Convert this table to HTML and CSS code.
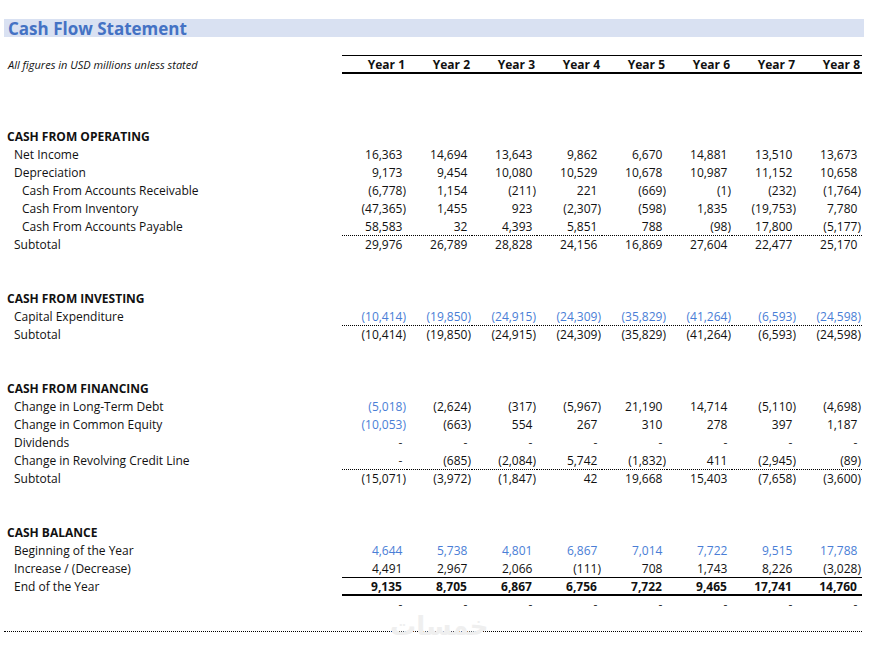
FILE: index.html
```html
<!DOCTYPE html>
<html>
<head>
<meta charset="utf-8">
<link rel="stylesheet" href="styles.css">
</head>
<body>
<div class="sheet">
  <div class="row"></div>
  <div class="row title-row"><div class="title">Cash Flow Statement</div></div>
  <div class="row"></div>
  <div class="row head">
    <div class="lbl sub">All figures in USD millions unless stated</div>
    <div class="c yh">Year 1</div><div class="c yh">Year 2</div><div class="c yh">Year 3</div><div class="c yh">Year 4</div><div class="c yh">Year 5</div><div class="c yh">Year 6</div><div class="c yh">Year 7</div><div class="c yh">Year 8</div>
  </div>
  <div class="row"></div>
  <div class="row"></div>
  <div class="row"></div>

  <div class="row"><div class="lbl sec">CASH FROM OPERATING</div></div>
  <div class="row"><div class="lbl l1">Net Income</div>
    <div class="c p">16,363</div><div class="c p">14,694</div><div class="c p">13,643</div><div class="c p">9,862</div><div class="c p">6,670</div><div class="c p">14,881</div><div class="c p">13,510</div><div class="c p">13,673</div></div>
  <div class="row"><div class="lbl l1">Depreciation</div>
    <div class="c p">9,173</div><div class="c p">9,454</div><div class="c p">10,080</div><div class="c p">10,529</div><div class="c p">10,678</div><div class="c p">10,987</div><div class="c p">11,152</div><div class="c p">10,658</div></div>
  <div class="row"><div class="lbl l2">Cash From Accounts Receivable</div>
    <div class="c">(6,778)</div><div class="c p">1,154</div><div class="c">(211)</div><div class="c p">221</div><div class="c">(669)</div><div class="c">(1)</div><div class="c">(232)</div><div class="c">(1,764)</div></div>
  <div class="row"><div class="lbl l2">Cash From Inventory</div>
    <div class="c">(47,365)</div><div class="c p">1,455</div><div class="c p">923</div><div class="c">(2,307)</div><div class="c">(598)</div><div class="c p">1,835</div><div class="c">(19,753)</div><div class="c p">7,780</div></div>
  <div class="row"><div class="lbl l2">Cash From Accounts Payable</div>
    <div class="c p">58,583</div><div class="c p">32</div><div class="c p">4,393</div><div class="c p">5,851</div><div class="c p">788</div><div class="c">(98)</div><div class="c p">17,800</div><div class="c">(5,177)</div></div>
  <div class="row dot"><div class="lbl l1">Subtotal</div>
    <div class="c p">29,976</div><div class="c p">26,789</div><div class="c p">28,828</div><div class="c p">24,156</div><div class="c p">16,869</div><div class="c p">27,604</div><div class="c p">22,477</div><div class="c p">25,170</div></div>
  <div class="row"></div>
  <div class="row"></div>

  <div class="row"><div class="lbl sec">CASH FROM INVESTING</div></div>
  <div class="row"><div class="lbl l1">Capital Expenditure</div>
    <div class="c in">(10,414)</div><div class="c in">(19,850)</div><div class="c in">(24,915)</div><div class="c in">(24,309)</div><div class="c in">(35,829)</div><div class="c in">(41,264)</div><div class="c in">(6,593)</div><div class="c in">(24,598)</div></div>
  <div class="row dot"><div class="lbl l1">Subtotal</div>
    <div class="c">(10,414)</div><div class="c">(19,850)</div><div class="c">(24,915)</div><div class="c">(24,309)</div><div class="c">(35,829)</div><div class="c">(41,264)</div><div class="c">(6,593)</div><div class="c">(24,598)</div></div>
  <div class="row"></div>
  <div class="row"></div>

  <div class="row"><div class="lbl sec">CASH FROM FINANCING</div></div>
  <div class="row"><div class="lbl l1">Change in Long-Term Debt</div>
    <div class="c in">(5,018)</div><div class="c">(2,624)</div><div class="c">(317)</div><div class="c">(5,967)</div><div class="c p">21,190</div><div class="c p">14,714</div><div class="c">(5,110)</div><div class="c">(4,698)</div></div>
  <div class="row"><div class="lbl l1">Change in Common Equity</div>
    <div class="c in">(10,053)</div><div class="c">(663)</div><div class="c p">554</div><div class="c p">267</div><div class="c p">310</div><div class="c p">278</div><div class="c p">397</div><div class="c p">1,187</div></div>
  <div class="row"><div class="lbl l1">Dividends</div>
    <div class="c p dash">-</div><div class="c p dash">-</div><div class="c p dash">-</div><div class="c p dash">-</div><div class="c p dash">-</div><div class="c p dash">-</div><div class="c p dash">-</div><div class="c p dash">-</div></div>
  <div class="row"><div class="lbl l1">Change in Revolving Credit Line</div>
    <div class="c p dash">-</div><div class="c">(685)</div><div class="c">(2,084)</div><div class="c p">5,742</div><div class="c">(1,832)</div><div class="c p">411</div><div class="c">(2,945)</div><div class="c">(89)</div></div>
  <div class="row dot"><div class="lbl l1">Subtotal</div>
    <div class="c">(15,071)</div><div class="c">(3,972)</div><div class="c">(1,847)</div><div class="c p">42</div><div class="c p">19,668</div><div class="c p">15,403</div><div class="c">(7,658)</div><div class="c">(3,600)</div></div>
  <div class="row"></div>
  <div class="row"></div>

  <div class="row"><div class="lbl sec">CASH BALANCE</div></div>
  <div class="row"><div class="lbl l1">Beginning of the Year</div>
    <div class="c p in">4,644</div><div class="c p in">5,738</div><div class="c p in">4,801</div><div class="c p in">6,867</div><div class="c p in">7,014</div><div class="c p in">7,722</div><div class="c p in">9,515</div><div class="c p in">17,788</div></div>
  <div class="row"><div class="lbl l1">Increase / (Decrease)</div>
    <div class="c p">4,491</div><div class="c p">2,967</div><div class="c p">2,066</div><div class="c">(111)</div><div class="c p">708</div><div class="c p">1,743</div><div class="c p">8,226</div><div class="c">(3,028)</div></div>
  <div class="row total"><div class="lbl l1">End of the Year</div>
    <div class="c p">9,135</div><div class="c p">8,705</div><div class="c p">6,867</div><div class="c p">6,756</div><div class="c p">7,722</div><div class="c p">9,465</div><div class="c p">17,741</div><div class="c p">14,760</div></div>
  <div class="row"><div class="lbl"></div>
    <div class="c p dash">-</div><div class="c p dash">-</div><div class="c p dash">-</div><div class="c p dash">-</div><div class="c p dash">-</div><div class="c p dash">-</div><div class="c p dash">-</div><div class="c p dash">-</div></div>
  <div class="row"></div>
  <div class="mark" lang="ar" dir="rtl">خمسات</div>
  <div class="row enddot"></div>
</div>
</body>
</html>
```
FILE: styles.css
```css
html, body {
  margin: 0;
  padding: 0;
  background: #ffffff;
}
.sheet {
  position: relative;
  padding: 1px 0 0 4px;
  font-family: "Open Sans", "Noto Sans", sans-serif;
  font-size: 12px;
  color: #111111;
}
.row {
  display: grid;
  grid-template-columns: 338px repeat(8, 65px);
  grid-template-rows: 18px;
  height: 18px;
  box-sizing: border-box;
  width: 858px;
}
.lbl, .c {
  height: 18px;
  box-sizing: border-box;
  padding-top: 1px;
  line-height: 18px;
  white-space: nowrap;
}
.c {
  text-align: right;
  padding-right: 1px;
}
.c.p::after {
  content: ")";
  visibility: hidden;
}
.in { color: #4a7ed6; }
.dash { color: #333333; }
.sec { font-weight: 700; padding-left: 3px; }
.l1 { padding-left: 10px; }
.l2 { padding-left: 18px; }
.sub {
  font-style: italic;
  font-size: 11px;
  padding-left: 4px;
}
.title-row { display: block; }
.title {
  width: 860px;
  height: 18px;
  background: #d9e1f2;
  color: #4472c4;
  font-weight: 700;
  font-size: 17px;
  line-height: 19px;
  padding-left: 4px;
  box-sizing: border-box;
}
.head .c {
  border-top: 1px solid #000;
  border-bottom: 1px solid #000;
  box-shadow: 0 1px 0 #000;
  font-weight: 700;
  padding-top: 0;
  padding-right: 2px;
}
.dot .c {
  border-top: 1px dotted #000;
  padding-top: 0;
}
.total .c {
  border-top: 1px solid #000;
  border-bottom: 1px solid #000;
  box-shadow: 0 1px 0 #000;
  font-weight: 700;
  padding-top: 0;
}
.enddot {
  border-top: 1px dotted #000;
  height: 17px;
}
.mark {
  position: absolute;
  left: 390px;
  top: 619px;
  font-family: "DejaVu Sans", sans-serif;
  font-size: 26px;
  line-height: 14px;
  color: #efefef;
  font-weight: 700;
}
```
